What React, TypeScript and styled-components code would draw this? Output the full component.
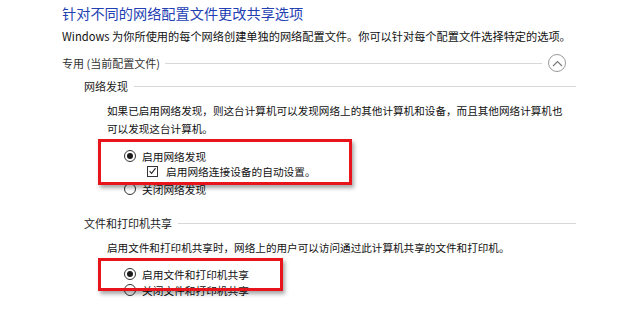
import React from "react";
import styled, { createGlobalStyle } from "styled-components";

const GlobalStyle = createGlobalStyle`
  html, body {
    margin: 0;
    padding: 0;
    background: #ffffff;
  }
  body {
    font-family: "Noto Sans CJK SC", "Liberation Sans", sans-serif;
    color: #111;
  }
`;

function App() {
  return (
    <>
      <GlobalStyle />
      <StPage>
        <StTitle>针对不同的网络配置文件更改共享选项</StTitle>
        <StIntro>Windows 为你所使用的每个网络创建单独的网络配置文件。你可以针对每个配置文件选择特定的选项。</StIntro>

        <StProfileRow>
          <StProfileLabel>专用 (当前配置文件)</StProfileLabel>
          <StRule />
          <StCollapse aria-label="折叠">
            <svg width="11" height="7" viewBox="0 0 11 7">
              <path d="M1 6 L5.5 1.5 L10 6" fill="none" stroke="#7a7a7a" strokeWidth="1.2" />
            </svg>
          </StCollapse>
        </StProfileRow>

        <StGroupRow>
          <StGroupLabel>网络发现</StGroupLabel>
          <StRule />
        </StGroupRow>
        <StDesc>
          如果已启用网络发现，则这台计算机可以发现网络上的其他计算机和设备，而且其他网络计算机也
          <br />
          可以发现这台计算机。
        </StDesc>
        <StOptions>
          <StHighlight $width={254} $padTop={6} $padBottom={3} $overlap={4}>
            <StOption>
              <StRadio $checked />
              启用网络发现
            </StOption>
            <StSubOption>
              <StCheck>
                <svg width="10" height="10" viewBox="0 0 10 10">
                  <path d="M1.8 5.2 L4 7.6 L8.4 1.8" fill="none" stroke="#222" strokeWidth="1.2" />
                </svg>
              </StCheck>
              启用网络连接设备的自动设置。
            </StSubOption>
          </StHighlight>
          <StOption>
            <StRadio />
            关闭网络发现
          </StOption>
        </StOptions>

        <StGroupRow $gap={16}>
          <StGroupLabel>文件和打印机共享</StGroupLabel>
          <StRule />
        </StGroupRow>
        <StDesc>启用文件和打印机共享时，网络上的用户可以访问通过此计算机共享的文件和打印机。</StDesc>
        <StOptions>
          <StHighlight $width={185} $padTop={5} $padBottom={6} $overlap={9}>
            <StOption>
              <StRadio $checked />
              启用文件和打印机共享
            </StOption>
          </StHighlight>
          <StOption>
            <StRadio />
            关闭文件和打印机共享
          </StOption>
        </StOptions>
      </StPage>
    </>
  );
}

const StPage = styled.div`
  width: 514px;
  padding-left: 62px;
  font-size: 10.7px;
`;

const StTitle = styled.h1`
  margin: 0;
  font-size: 14.2px;
  font-weight: normal;
  line-height: 26px;
  color: #2340b2;
  white-space: nowrap;
`;

const StIntro = styled.p`
  margin: 1px 0 0;
  font-size: 11.2px;
  line-height: 18px;
  white-space: nowrap;
`;

const StProfileRow = styled.div`
  display: flex;
  align-items: center;
  height: 20px;
  margin-top: 8px;
  gap: 5px;
`;

const StProfileLabel = styled.span`
  font-size: 11px;
  white-space: nowrap;
  color: #333;
`;

const StRule = styled.div`
  flex: 1;
  height: 1px;
  background: #d8d8d8;
`;

const StCollapse = styled.button`
  width: 18px;
  height: 18px;
  margin-left: 1px;
  margin-right: 10px;
  padding: 0;
  border: 1px solid #9a9a9a;
  border-radius: 50%;
  background: #fff;
  display: flex;
  align-items: center;
  justify-content: center;
`;

const StGroupRow = styled.div<{ $gap?: number }>`
  display: flex;
  align-items: center;
  gap: 6px;
  height: 20px;
  margin-top: ${(p) => p.$gap ?? 3}px;
  padding-left: 22px;
  font-size: 11px;
`;

const StGroupLabel = styled.span`
  white-space: nowrap;
  color: #222;
`;

const StDesc = styled.p<{ $gap?: number }>`
  margin: ${(p) => p.$gap ?? 6}px 0 0;
  padding-left: 45px;
  font-size: 10.6px;
  line-height: 18px;
  white-space: nowrap;
`;

const StOptions = styled.div`
  display: flex;
  flex-direction: column;
  align-items: flex-start;
  padding-left: 62px;
`;

const StHighlight = styled.div<{ $width: number; $padTop: number; $padBottom: number; $overlap: number }>`
  position: relative;
  z-index: 1;
  box-sizing: border-box;
  width: ${(p) => p.$width}px;
  margin: 1px 0 -${(p) => p.$overlap}px -26px;
  padding: ${(p) => p.$padTop}px 0 ${(p) => p.$padBottom}px 23px;
  border: 3px solid #e8141b;
  box-shadow: 2px 3px 4px rgba(0, 0, 0, 0.35);
  display: flex;
  flex-direction: column;
`;

const StOption = styled.label`
  display: flex;
  align-items: center;
  gap: 6px;
  height: 16px;
  white-space: nowrap;
`;

const StSubOption = styled(StOption)`
  padding-left: 23px;
  gap: 8px;
  margin-top: -1px;
`;

const StRadio = styled.span<{ $checked?: boolean }>`
  box-sizing: border-box;
  width: 12px;
  height: 12px;
  border: 1px solid #333;
  border-radius: 50%;
  background: #fff;
  display: flex;
  align-items: center;
  justify-content: center;
  &::after {
    content: "";
    width: 6px;
    height: 6px;
    border-radius: 50%;
    background: ${(p) => (p.$checked ? "#1a1a1a" : "transparent")};
  }
`;

const StCheck = styled.span`
  box-sizing: border-box;
  width: 11px;
  height: 11px;
  border: 1px solid #333;
  background: #fff;
  display: flex;
  align-items: center;
  justify-content: center;
`;

export default App;
